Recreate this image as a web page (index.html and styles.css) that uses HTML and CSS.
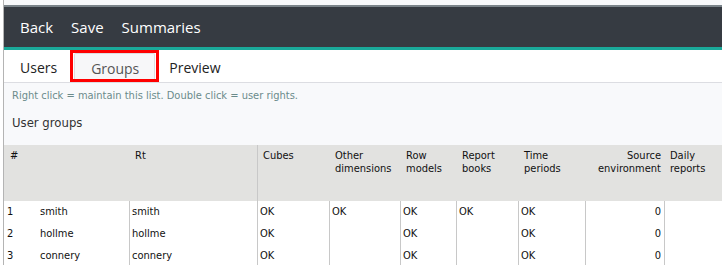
FILE: index.html
```html
<!DOCTYPE html>
<html lang="en">
<head>
    <meta charset="UTF-8">
    <title>User groups</title>
    <link rel="stylesheet" href="styles.css">
</head>
<body>
    <div class="frame">
        <header class="topbar">
            <a href="#">Back</a>
            <a href="#">Save</a>
            <a href="#">Summaries</a>
        </header>

        <nav class="tabs">
            <a class="tab" href="#">Users</a>
            <span class="marked">
                <a class="tab active" href="#">Groups</a>
            </span>
            <a class="tab" href="#">Preview</a>
        </nav>

        <main class="content">
            <p class="hint">Right click = maintain this list. Double click = user rights.</p>
            <h2 class="title">User groups</h2>

            <div class="grid">
                <div class="row head">
                    <div class="cell">#</div>
                    <div class="cell"></div>
                    <div class="cell">Rt</div>
                    <div class="cell sep">Cubes</div>
                    <div class="cell">Other dimensions</div>
                    <div class="cell">Row models</div>
                    <div class="cell">Report books</div>
                    <div class="cell">Time periods</div>
                    <div class="cell num">Source environment</div>
                    <div class="cell">Daily reports</div>
                </div>

                <div class="row">
                    <div class="cell">1</div>
                    <div class="cell">smith</div>
                    <div class="cell sep">smith</div>
                    <div class="cell sep">OK</div>
                    <div class="cell sep">OK</div>
                    <div class="cell sep">OK</div>
                    <div class="cell sep">OK</div>
                    <div class="cell sep">OK</div>
                    <div class="cell sep num">0</div>
                    <div class="cell sep"></div>
                </div>
                <div class="row">
                    <div class="cell">2</div>
                    <div class="cell">hollme</div>
                    <div class="cell sep">hollme</div>
                    <div class="cell sep">OK</div>
                    <div class="cell sep"></div>
                    <div class="cell sep">OK</div>
                    <div class="cell sep"></div>
                    <div class="cell sep">OK</div>
                    <div class="cell sep num">0</div>
                    <div class="cell sep"></div>
                </div>
                <div class="row">
                    <div class="cell">3</div>
                    <div class="cell">connery</div>
                    <div class="cell sep">connery</div>
                    <div class="cell sep">OK</div>
                    <div class="cell sep"></div>
                    <div class="cell sep">OK</div>
                    <div class="cell sep"></div>
                    <div class="cell sep">OK</div>
                    <div class="cell sep num">0</div>
                    <div class="cell sep"></div>
                </div>
            </div>
        </main>
    </div>
</body>
</html>
```

FILE: styles.css
```css
body {
    margin: 0;
    background-color: #fff;
    font-family: "DejaVu Sans Condensed", "DejaVu Sans", sans-serif;
    overflow: hidden;
}
.frame {
    margin-left: 3px;
    padding-top: 5px;
    min-height: 100vh;
    border-left: 1px solid #b4b4b4;
    background-color: #f8f9fb;
}
.topbar {
    display: flex;
    align-items: center;
    gap: 18px;
    height: 40px;
    padding-left: 16px;
    background-color: #363b42;
    border-top: 2px solid #7b848a;
    border-bottom: 3px solid #1aa99a;
}
.topbar a {
    color: #fff;
    text-decoration: none;
    font-family: "Open Sans", sans-serif;
    font-size: 15px;
}
.tabs {
    display: flex;
    align-items: flex-start;
    height: 32px;
    padding-left: 16px;
    background-color: #fff;
    border-bottom: 1px solid #dcdde2;
}
.tab {
    display: block;
    color: #222;
    text-decoration: none;
    font-family: "Open Sans", sans-serif;
    font-size: 14px;
    line-height: 36px;
}
.marked {
    display: flex;
    height: 26px;
    margin: 0 10px 0 13px;
    padding: 0 1px;
    border: 3px solid #f00;
}
.tab.active {
    padding: 0 15px 0 16px;
    line-height: 30px;
    color: #555;
    background-color: #f7f7f9;
    border: 1px solid #dddde0;
    border-bottom: none;
    border-radius: 2px 2px 0 0;
}
.content {
    padding-top: 6px;
}
.hint {
    margin: 0 0 0 8px;
    font-size: 11px;
    color: #6b8b8b;
    line-height: 14px;
}
.title {
    margin: 12px 0 0 8px;
    font-size: 13px;
    font-weight: normal;
    color: #333;
    line-height: 15px;
}
.grid {
    margin-top: 15px;
    font-size: 11px;
    color: #111;
}
.row {
    display: grid;
    grid-template-columns: 33px 92px 128px 72px 71px 56px 62px 67px 79px 1fr;
    height: 22px;
    background-color: #fff;
}
.row .cell {
    box-sizing: border-box;
    padding: 0 3px 0 3px;
    line-height: 22px;
    white-space: nowrap;
}
.row .cell.sep {
    border-left: 1px solid #c8c8c8;
    padding-left: 2px;
}
.row .cell.num {
    text-align: right;
}
.row.head {
    height: 56px;
    background-color: #e2e2e0;
}
.row.head .cell {
    padding: 4px 3px 0 6px;
    line-height: 13px;
    white-space: normal;
}
.row.head .cell.sep {
    padding-left: 5px;
}
.row.head .cell.num {
    padding-left: 0;
}
```
